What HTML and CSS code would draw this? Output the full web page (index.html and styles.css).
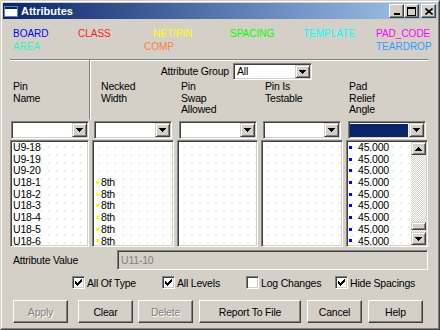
FILE: index.html
```
<!DOCTYPE html>
<html>
<head>
	<title>Attributes</title>
	<link rel="stylesheet" href="styles.css">
</head>
<body>
<div class="window">
	<div class="frame">
		<div class="titlebar">
			<svg class="appIcon" width="14" height="11" viewBox="0 0 14 11"><rect x="0.5" y="0.5" width="13" height="10" fill="#fff" stroke="#6a7fb0"/><rect x="1" y="1" width="12" height="2" fill="#0a246a"/></svg>
			<span class="title">Attributes</span>
			<div class="capButtons">
				<span class="capButton"><svg width="8" height="8" viewBox="0 0 8 8" shape-rendering="crispEdges"><rect x="1" y="6" width="6" height="2"/></svg></span>
				<span class="capButton"><svg width="9" height="9" viewBox="0 0 9 9" shape-rendering="crispEdges"><path d="M0 0h9v9h-9z M1 2v6h7v-6z" fill-rule="evenodd"/></svg></span>
				<span class="capButton closeButton"><svg width="8" height="7" viewBox="0 0 8 7"><path d="M0.5 0.5L7.5 6.5M7.5 0.5L0.5 6.5" stroke="#000" stroke-width="1.6"/></svg></span>
			</div>
		</div>

		<div class="content">
			<div class="legend">
				<span class="lgBoard">BOARD</span>
				<span class="lgClass">CLASS</span>
				<span class="lgNetpin">NET/PIN</span>
				<span class="lgSpacing">SPACING</span>
				<span class="lgTemplate">TEMPLATE</span>
				<span class="lgPadcode">PAD_CODE</span>
				<span class="lgArea">AREA</span>
				<span class="lgComp">COMP</span>
				<span class="lgTeardrop">TEARDROP</span>
			</div>

			<div class="cols group">
				<div class="groupLeft">Pin<br>Name</div>
				<div class="attrGroup">
					<span class="attrGroupLabel">Attribute Group</span>
					<div class="combo comboSmall">
						<div class="comboField">All</div>
						<span class="dropButton"><svg width="7" height="4" viewBox="0 0 7 4" shape-rendering="crispEdges"><path d="M0 0h7v1h-1v1h-1v1h-1v1h-1v-1h-1v-1h-1v-1h-1z"/></svg></span>
					</div>
				</div>
				<div class="head head2">Necked<br>Width</div>
				<div class="head head3">Pin<br>Swap<br>Allowed</div>
				<div class="head head4">Pin Is<br>Testable</div>
				<div class="head head5">Pad<br>Relief<br>Angle</div>
			</div>

			<div class="cols comboRow">
				<div class="combo"><div class="comboField"></div><span class="dropButton"><svg width="7" height="4" viewBox="0 0 7 4" shape-rendering="crispEdges"><path d="M0 0h7v1h-1v1h-1v1h-1v1h-1v-1h-1v-1h-1v-1h-1z"/></svg></span></div>
				<div class="combo"><div class="comboField"></div><span class="dropButton"><svg width="7" height="4" viewBox="0 0 7 4" shape-rendering="crispEdges"><path d="M0 0h7v1h-1v1h-1v1h-1v1h-1v-1h-1v-1h-1v-1h-1z"/></svg></span></div>
				<div class="combo"><div class="comboField"></div><span class="dropButton"><svg width="7" height="4" viewBox="0 0 7 4" shape-rendering="crispEdges"><path d="M0 0h7v1h-1v1h-1v1h-1v1h-1v-1h-1v-1h-1v-1h-1z"/></svg></span></div>
				<div class="combo"><div class="comboField"></div><span class="dropButton"><svg width="7" height="4" viewBox="0 0 7 4" shape-rendering="crispEdges"><path d="M0 0h7v1h-1v1h-1v1h-1v1h-1v-1h-1v-1h-1v-1h-1z"/></svg></span></div>
				<div class="combo"><div class="comboField selected"></div><span class="dropButton"><svg width="7" height="4" viewBox="0 0 7 4" shape-rendering="crispEdges"><path d="M0 0h7v1h-1v1h-1v1h-1v1h-1v-1h-1v-1h-1v-1h-1z"/></svg></span></div>
			</div>

			<div class="cols listRow">
				<div class="list">
					<div class="rows listNames">
						<div class="row">U9-18</div>
						<div class="row">U9-19</div>
						<div class="row">U9-20</div>
						<div class="row">U18-1</div>
						<div class="row">U18-2</div>
						<div class="row">U18-3</div>
						<div class="row">U18-4</div>
						<div class="row">U18-5</div>
						<div class="row">U18-6</div>
					</div>
				</div>
				<div class="list">
					<div class="rows listNecked">
						<div class="row"></div>
						<div class="row"></div>
						<div class="row"></div>
						<div class="row"><span class="mark yellowMark"></span>8th</div>
						<div class="row"><span class="mark yellowMark"></span>8th</div>
						<div class="row"><span class="mark yellowMark"></span>8th</div>
						<div class="row"><span class="mark yellowMark"></span>8th</div>
						<div class="row"><span class="mark yellowMark"></span>8th</div>
						<div class="row"><span class="mark yellowMark"></span>8th</div>
					</div>
				</div>
				<div class="list"></div>
				<div class="list"></div>
				<div class="list listScroll">
					<div class="rows listAngle">
						<div class="row"><span class="mark blueMark"></span>45.000</div>
						<div class="row"><span class="mark blueMark"></span>45.000</div>
						<div class="row"><span class="mark blueMark"></span>45.000</div>
						<div class="row"><span class="mark blueMark"></span>45.000</div>
						<div class="row"><span class="mark blueMark"></span>45.000</div>
						<div class="row"><span class="mark blueMark"></span>45.000</div>
						<div class="row"><span class="mark blueMark"></span>45.000</div>
						<div class="row"><span class="mark blueMark"></span>45.000</div>
						<div class="row"><span class="mark blueMark"></span>45.000</div>
					</div>
					<div class="scrollbar">
						<span class="scrollButton"><svg width="7" height="4" viewBox="0 0 7 4" shape-rendering="crispEdges"><path d="M3 0h1v1h1v1h1v1h1v1h-7v-1h1v-1h1v-1h1z"/></svg></span>
						<span class="track"></span>
						<span class="thumb"></span>
						<span class="track trackEnd"></span>
						<span class="scrollButton"><svg width="7" height="4" viewBox="0 0 7 4" shape-rendering="crispEdges"><path d="M0 0h7v1h-1v1h-1v1h-1v1h-1v-1h-1v-1h-1v-1h-1z"/></svg></span>
					</div>
				</div>
			</div>

			<div class="valueRow">
				<span class="valueLabel">Attribute Value</span>
				<div class="valueField">U11-10</div>
			</div>

			<div class="checkRow">
				<div class="checkItem checkType"><span class="checkBox"><svg width="7" height="7" viewBox="0 0 7 7" shape-rendering="crispEdges"><path d="M6 0h1v3h-1v1h-1v1h-1v1h-1v1h-1v-1h-1v-1h-1v-3h1v1h1v1h1v-1h1v-1h1z"/></svg></span>All Of Type</div>
				<div class="checkItem checkLevels"><span class="checkBox"><svg width="7" height="7" viewBox="0 0 7 7" shape-rendering="crispEdges"><path d="M6 0h1v3h-1v1h-1v1h-1v1h-1v1h-1v-1h-1v-1h-1v-3h1v1h1v1h1v-1h1v-1h1z"/></svg></span>All Levels</div>
				<div class="checkItem checkLog"><span class="checkBox"></span>Log Changes</div>
				<div class="checkItem"><span class="checkBox"><svg width="7" height="7" viewBox="0 0 7 7" shape-rendering="crispEdges"><path d="M6 0h1v3h-1v1h-1v1h-1v1h-1v1h-1v-1h-1v-1h-1v-3h1v1h1v1h1v-1h1v-1h1z"/></svg></span>Hide Spacings</div>
			</div>

			<div class="buttonRow">
				<span class="button disabled btnApply">Apply</span>
				<span class="button btnClear">Clear</span>
				<span class="button disabled">Delete</span>
				<span class="button btnWide">Report To File</span>
				<span class="button">Cancel</span>
				<span class="button">Help</span>
			</div>
		</div>
	</div>
</div>
</body>
</html>
```

FILE: styles.css
```
body {
	margin: 0;
	background: #d4d0c8;
	font-family: "Liberation Sans", Arial, sans-serif;
	font-size: 10.5px;
	letter-spacing: -0.2px;
	color: #000;
}

/* window frame */
.window {
	width: 440px;
	height: 330px;
	box-sizing: border-box;
	border: 1px solid;
	border-color: #d4d0c8 #404040 #404040 #d4d0c8;
}
.frame {
	height: 100%;
	box-sizing: border-box;
	border: 1px solid;
	border-color: #fff #808080 #808080 #fff;
	padding: 1px;
}
.titlebar {
	height: 16px;
	display: flex;
	align-items: center;
	padding: 0 1px 0 1px;
	background: linear-gradient(to right, #0a246a, #a6caf0);
	color: #fff;
}
.appIcon {
	display: block;
	margin-right: 3px;
}
.title {
	font-size: 11px;
	font-weight: bold;
	letter-spacing: 0;
}
.capButtons {
	margin-left: auto;
	display: flex;
}
.capButton {
	width: 15px;
	height: 14px;
	box-sizing: border-box;
	display: flex;
	align-items: center;
	justify-content: center;
	background: #d4d0c8;
	border: 1px solid;
	border-color: #fff #404040 #404040 #fff;
	box-shadow: inset -1px -1px #808080;
}
.closeButton {
	margin-left: 2px;
}

.content {
	padding: 8px 0 0 7px;
}

/* colour legend */
.legend {
	margin-left: 3px;
	display: grid;
	grid-template-columns: 65px 75px 77px 73px 73px auto;
	font-size: 10px;
	line-height: 13px;
	letter-spacing: 0;
	white-space: nowrap;
}
.lgBoard { color: #0000ff; }
.lgClass { color: #ff2020; }
.lgNetpin { color: #ffff00; }
.lgSpacing { color: #00ff00; }
.lgTemplate { color: #00ffff; }
.lgPadcode { color: #ff00ff; }
.lgArea { color: #40ecc0; }
.lgComp {
	color: #f88040;
	grid-column: 2 / span 3;
	padding-left: 66px;
}
.lgTeardrop {
	color: #3399ff;
	grid-column: 6;
}

/* shared 5 column layout */
.cols {
	width: 418px;
	display: grid;
	grid-template-columns: 79px 82px 81px 82px 82px;
	column-gap: 3px;
}

/* header group */
.group {
	margin-top: 6px;
	height: 59px;
	grid-template-rows: 21px auto;
	align-content: start;
	border-top: 1px solid #808080;
	box-shadow: inset 0 1px #fff;
	line-height: 11.5px;
}
.groupLeft {
	grid-column: 1;
	grid-row: 1 / span 2;
	width: 80px;
	height: 59px;
	box-sizing: border-box;
	padding: 21px 0 0 3px;
	border-right: 1px solid #808080;
	box-shadow: 1px 0 #fff;
}
.attrGroup {
	grid-column: 2 / -1;
	grid-row: 1;
	padding-top: 3px;
	display: flex;
	align-items: flex-start;
}
.attrGroupLabel {
	width: 141px;
	box-sizing: border-box;
	padding-right: 4px;
	padding-top: 3px;
	text-align: right;
}
.head {
	grid-row: 2;
	padding-left: 4px;
}
.head2 { grid-column: 2; padding-left: 9px; }
.head3 { grid-column: 3; }
.head4 { grid-column: 4; }
.head5 { grid-column: 5; padding-left: 3px; }

/* combo boxes */
.comboRow {
	margin-top: 2px;
}
.combo {
	width: 78px;
	height: 18px;
	box-sizing: border-box;
	display: flex;
	justify-self: center;
	background: #fff;
	border: 1px solid;
	border-color: #808080 #fff #fff #808080;
	box-shadow: inset 1px 1px #404040, inset -1px -1px #d4d0c8;
	padding: 1px;
	line-height: 14px;
}
.comboSmall {
	width: 79px;
	height: 17px;
	line-height: 13px;
}
.comboField {
	flex: 1;
	padding-left: 2px;
}
.comboField.selected {
	background: #0a246a;
	margin: 1px 1px 0 0;
}
.dropButton {
	width: 15px;
	box-sizing: border-box;
	display: flex;
	align-items: center;
	justify-content: center;
	background: #d4d0c8;
	border: 1px solid;
	border-color: #d4d0c8 #404040 #404040 #d4d0c8;
	box-shadow: inset 1px 1px #fff, inset -1px -1px #808080;
}
.dropButton svg, .scrollButton svg {
	display: block;
}

/* lists */
.listRow {
	margin-top: 1px;
}
.list {
	height: 107px;
	box-sizing: border-box;
	overflow: hidden;
	border: 1px solid;
	border-color: #808080 #fff #fff #808080;
	box-shadow: inset 1px 1px #404040, inset -1px -1px #d4d0c8;
	padding: 1px;
	background: radial-gradient(circle, #eeeeee 0.7px, transparent 1px) 2px 2px / 8px 8px, #fff;
}
.listScroll {
	display: flex;
}
.rows {
	flex: 1;
}
.row {
	height: 11.7px;
	line-height: 11.7px;
	display: flex;
	align-items: center;
	white-space: nowrap;
}
.listNames .row {
	padding-left: 1px;
}
.mark {
	width: 3px;
	height: 3px;
	margin-top: -1px;
}
.yellowMark {
	background: #ffff00;
	margin-left: 2px;
	margin-right: 2px;
}
.blueMark {
	background: #0000ff;
	margin-left: 1px;
	margin-right: 6px;
}

.scrollbar {
	width: 15px;
	display: flex;
	flex-direction: column;
}
.scrollButton, .thumb {
	box-sizing: border-box;
	background: #d4d0c8;
	border: 1px solid;
	border-color: #d4d0c8 #404040 #404040 #d4d0c8;
	box-shadow: inset 1px 1px #fff, inset -1px -1px #808080;
}
.scrollButton {
	height: 13px;
	display: flex;
	align-items: center;
	justify-content: center;
}
.thumb {
	height: 8px;
}
.track {
	flex: 1;
	background: repeating-conic-gradient(#d4d0c8 0 25%, #fff 0 50%) 0 0 / 2px 2px;
}
.trackEnd {
	flex: none;
	height: 2px;
}

/* attribute value */
.valueRow {
	margin-top: 3px;
	display: flex;
	align-items: center;
	width: 418px;
}
.valueLabel {
	width: 107px;
	padding-left: 3px;
	box-sizing: border-box;
}
.valueField {
	flex: 1;
	height: 20px;
	box-sizing: border-box;
	border: 1px solid;
	border-color: #808080 #fff #fff #808080;
	box-shadow: inset 1px 1px #404040, inset -1px -1px #d4d0c8;
	padding: 0 0 0 3px;
	line-height: 18px;
	color: #808080;
}

/* check boxes */
.checkRow {
	margin-top: 6px;
	padding-left: 62px;
	height: 13px;
	display: flex;
	align-items: center;
}
.checkItem {
	display: flex;
	align-items: center;
	white-space: nowrap;
}
.checkType { width: 90px; }
.checkLevels { width: 84px; }
.checkLog { width: 89px; }
.checkBox {
	width: 13px;
	height: 13px;
	box-sizing: border-box;
	display: flex;
	align-items: center;
	justify-content: center;
	margin-right: 2px;
	background: #fff;
	border: 1px solid;
	border-color: #808080 #fff #fff #808080;
	box-shadow: inset 1px 1px #404040, inset -1px -1px #d4d0c8;
}

/* buttons */
.buttonRow {
	margin-top: 11px;
	padding-left: 3px;
	display: flex;
	gap: 6px;
}
.button {
	width: 55px;
	height: 23px;
	box-sizing: border-box;
	display: flex;
	align-items: center;
	justify-content: center;
	background: #d4d0c8;
	border: 1px solid;
	border-color: #fff #404040 #404040 #fff;
	box-shadow: inset -1px -1px #808080;
}
.btnApply {
	margin-right: 4px;
}
.btnClear {
	margin-right: -1px;
}
.btnWide {
	width: 102px;
}
.disabled {
	color: #808080;
	text-shadow: 1px 1px #fff;
}
```
